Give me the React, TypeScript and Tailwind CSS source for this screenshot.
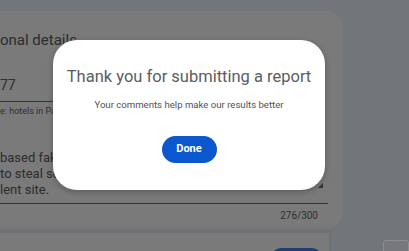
export default function App() {
  return (
    <div className="relative h-[251px] w-[409px] overflow-hidden bg-[#727579] font-['Roboto',sans-serif]">
      {/* Dimmed page behind the dialog */}
      <div className="pt-[11px]">
        <div className="relative flex h-[217px] w-[343px] flex-col rounded-r-[16px] bg-[#7a7a7a]">
          <div className="mt-[18px] flex items-baseline gap-[12px] whitespace-nowrap">
            <span className="text-[15px] leading-[22px] text-[#2b2c2e]">onal details</span>
            <span className="text-[8px] text-[#3a3b3d]">Optional</span>
          </div>
          <div className="mt-[22px] w-[320px] border-b border-[#353637] pb-[4px]">
            <span className="text-[14px] leading-[18px] text-[#2e2f31]">77</span>
          </div>
          <div className="mt-[3px] whitespace-nowrap text-[9px] leading-[12px] text-[#2e2f31]">
            e: hotels in Paris
          </div>
          <div className="relative mt-[33px] w-[328px] whitespace-nowrap border-b border-[#353637] pb-[5px] text-[13px] leading-[16px] text-[#2b2c2e]">
            <div>based fake site</div>
            <div>to steal sensitive</div>
            <div>lent site.</div>
            {/* resize grip */}
            <div className="absolute bottom-[15px] right-[5px] h-0 w-0 border-b-[5px] border-l-[5px] border-b-[#333436] border-l-transparent" />
          </div>
          <div className="mt-[6px] w-[318px] text-right text-[10px] leading-[12px] text-[#2e2f31]">276/300</div>
        </div>
        <div className="mt-[2px] flex items-start">
          <div className="h-[30px] w-[340px] border-r-2 border-t-[3px] border-[#6f7071] bg-[#7a7a7a] pl-[271px] pt-[15px]">
            <div className="h-[20px] w-[51px] rounded-full bg-[#1f3f74]" />
          </div>
          <div className="ml-[52px] mt-[10px] h-[20px] w-[30px] rounded-[3px] border border-[#8c8e91] bg-[#76787c]" />
        </div>
      </div>

      {/* Dialog overlay */}
      <div className="absolute inset-0 pl-[53px] pt-[40px]">
        <div className="flex h-[150px] w-[272px] flex-col items-center rounded-[24px] bg-white shadow-[0_2px_6px_rgba(0,0,0,0.25)]">
          <h2 className="mt-[25px] whitespace-nowrap text-[16.5px] leading-[24px] text-[#5a5d61]">
            Thank you for submitting a report
          </h2>
          <p className="mt-[9px] whitespace-nowrap text-[9.6px] leading-[14px] text-[#4f5256]">
            Your comments help make our results better
          </p>
          <button className="mt-[24px] h-[27px] w-[55px] rounded-full bg-[#0b57d0] text-[11px] font-bold text-white">
            Done
          </button>
        </div>
      </div>
    </div>
  );
}
